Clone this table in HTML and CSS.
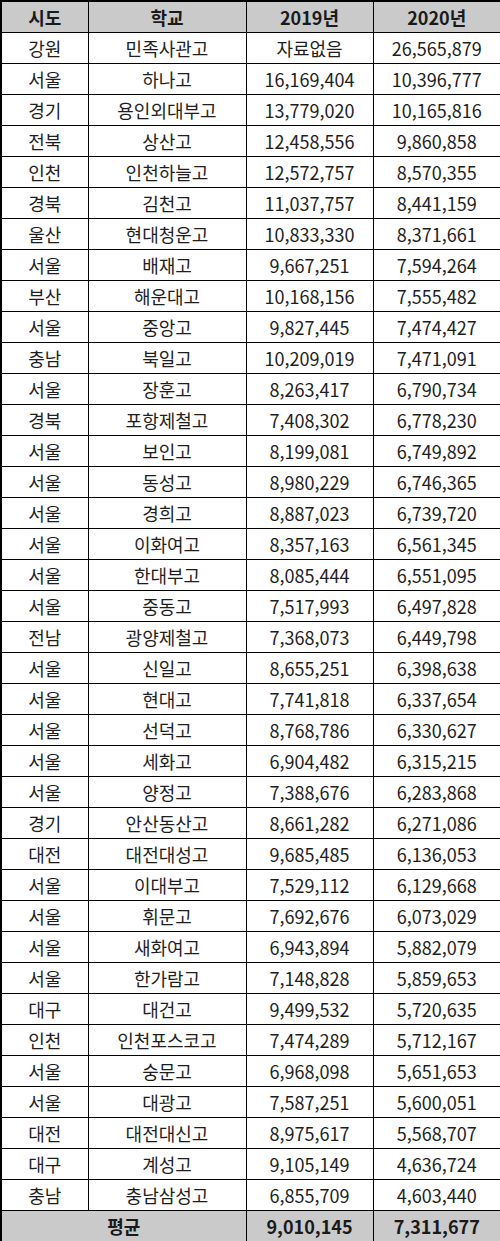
FILE: index.html
```html
<!DOCTYPE html>
<html lang="ko">
<head>
<meta charset="utf-8">
<link rel="stylesheet" href="styles.css">
</head>
<body>
<table class="tbl">
<colgroup><col class="c1"><col class="c2"><col class="c3"><col class="c4"></colgroup>
<thead>
<tr class="head"><th>시도</th><th>학교</th><th>2019년</th><th>2020년</th></tr>
</thead>
<tbody>
<tr><td>강원</td><td>민족사관고</td><td>자료없음</td><td>26,565,879</td></tr>
<tr><td>서울</td><td>하나고</td><td>16,169,404</td><td>10,396,777</td></tr>
<tr><td>경기</td><td>용인외대부고</td><td>13,779,020</td><td>10,165,816</td></tr>
<tr><td>전북</td><td>상산고</td><td>12,458,556</td><td>9,860,858</td></tr>
<tr><td>인천</td><td>인천하늘고</td><td>12,572,757</td><td>8,570,355</td></tr>
<tr><td>경북</td><td>김천고</td><td>11,037,757</td><td>8,441,159</td></tr>
<tr><td>울산</td><td>현대청운고</td><td>10,833,330</td><td>8,371,661</td></tr>
<tr><td>서울</td><td>배재고</td><td>9,667,251</td><td>7,594,264</td></tr>
<tr><td>부산</td><td>해운대고</td><td>10,168,156</td><td>7,555,482</td></tr>
<tr><td>서울</td><td>중앙고</td><td>9,827,445</td><td>7,474,427</td></tr>
<tr><td>충남</td><td>북일고</td><td>10,209,019</td><td>7,471,091</td></tr>
<tr><td>서울</td><td>장훈고</td><td>8,263,417</td><td>6,790,734</td></tr>
<tr><td>경북</td><td>포항제철고</td><td>7,408,302</td><td>6,778,230</td></tr>
<tr><td>서울</td><td>보인고</td><td>8,199,081</td><td>6,749,892</td></tr>
<tr><td>서울</td><td>동성고</td><td>8,980,229</td><td>6,746,365</td></tr>
<tr><td>서울</td><td>경희고</td><td>8,887,023</td><td>6,739,720</td></tr>
<tr><td>서울</td><td>이화여고</td><td>8,357,163</td><td>6,561,345</td></tr>
<tr><td>서울</td><td>한대부고</td><td>8,085,444</td><td>6,551,095</td></tr>
<tr><td>서울</td><td>중동고</td><td>7,517,993</td><td>6,497,828</td></tr>
<tr><td>전남</td><td>광양제철고</td><td>7,368,073</td><td>6,449,798</td></tr>
<tr><td>서울</td><td>신일고</td><td>8,655,251</td><td>6,398,638</td></tr>
<tr><td>서울</td><td>현대고</td><td>7,741,818</td><td>6,337,654</td></tr>
<tr><td>서울</td><td>선덕고</td><td>8,768,786</td><td>6,330,627</td></tr>
<tr><td>서울</td><td>세화고</td><td>6,904,482</td><td>6,315,215</td></tr>
<tr><td>서울</td><td>양정고</td><td>7,388,676</td><td>6,283,868</td></tr>
<tr><td>경기</td><td>안산동산고</td><td>8,661,282</td><td>6,271,086</td></tr>
<tr><td>대전</td><td>대전대성고</td><td>9,685,485</td><td>6,136,053</td></tr>
<tr><td>서울</td><td>이대부고</td><td>7,529,112</td><td>6,129,668</td></tr>
<tr><td>서울</td><td>휘문고</td><td>7,692,676</td><td>6,073,029</td></tr>
<tr><td>서울</td><td>새화여고</td><td>6,943,894</td><td>5,882,079</td></tr>
<tr><td>서울</td><td>한가람고</td><td>7,148,828</td><td>5,859,653</td></tr>
<tr><td>대구</td><td>대건고</td><td>9,499,532</td><td>5,720,635</td></tr>
<tr><td>인천</td><td>인천포스코고</td><td>7,474,289</td><td>5,712,167</td></tr>
<tr><td>서울</td><td>숭문고</td><td>6,968,098</td><td>5,651,653</td></tr>
<tr><td>서울</td><td>대광고</td><td>7,587,251</td><td>5,600,051</td></tr>
<tr><td>대전</td><td>대전대신고</td><td>8,975,617</td><td>5,568,707</td></tr>
<tr><td>대구</td><td>계성고</td><td>9,105,149</td><td>4,636,724</td></tr>
<tr><td>충남</td><td>충남삼성고</td><td>6,855,709</td><td>4,603,440</td></tr>
</tbody>
<tfoot>
<tr class="foot"><td colspan="2">평균</td><td>9,010,145</td><td>7,311,677</td></tr>
</tfoot>
</table>
</body>
</html>
```

FILE: styles.css
```css
html, body {
  margin: 0;
  padding: 0;
  background: #fff;
}
.tbl {
  width: 500px;
  table-layout: fixed;
  border-collapse: collapse;
  border: 2px solid #000;
  font-family: "Noto Sans CJK KR", "Noto Sans", sans-serif;
  font-size: 18px;
  color: #1e1e1e;
}
.c1 { width: 87px; }
.c2 { width: 158px; }
.c3 { width: 127px; }
.c4 { width: 128px; }
.tbl th, .tbl td {
  border: 1px solid #000;
  height: 30px;
  padding: 0;
  text-align: center;
  vertical-align: middle;
  line-height: 20px;
  white-space: nowrap;
}
.head th {
  background: #cacaca;
  font-weight: 700;
  color: #1a1a1a;
}
.foot td {
  background: #cacaca;
  font-weight: 700;
  color: #1a1a1a;
}
```
